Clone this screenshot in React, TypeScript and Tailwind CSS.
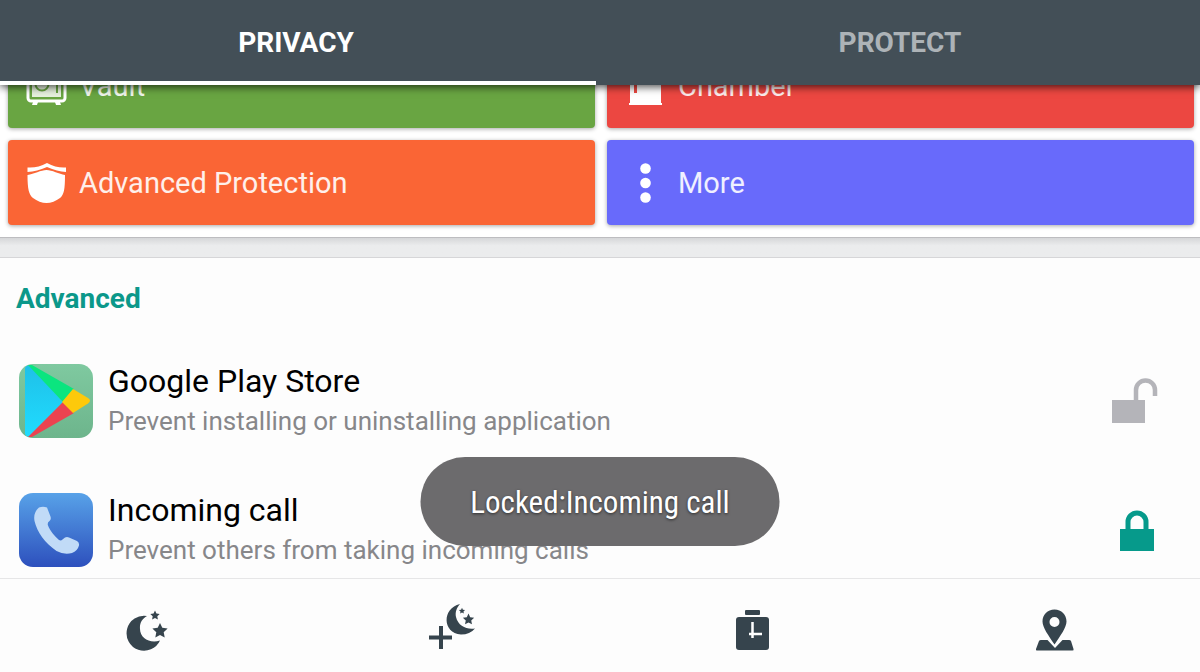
import type { ReactNode } from 'react'

function VaultIcon() {
  return (
    <svg viewBox="0 0 42 42" className="size-[42px]" fill="none" aria-hidden="true">
      <rect x="2" y="2" width="37" height="34" rx="3" stroke="#fff" strokeWidth="3" />
      <rect x="6" y="6" width="29" height="26" fill="#e6f1de" />
      <circle cx="16" cy="19" r="6.5" stroke="#69a542" strokeWidth="2" />
      <path d="M26 18h5v10" stroke="#69a542" strokeWidth="2" />
      <path d="M7 37h5l-1 3H6zM29 37h5l1 3h-5z" fill="#fff" />
    </svg>
  )
}

function DoorIcon() {
  return (
    <svg viewBox="0 0 42 42" className="size-[42px]" fill="#fff" aria-hidden="true">
      <path d="M5 2h31v36h1v2H4v-2h1z" />
      <path d="M9 18h3v10H9z" fill="#ec4741" />
    </svg>
  )
}

function ShieldIcon() {
  return (
    <svg viewBox="0 0 42 42" className="size-[42px]" fill="#fff" aria-hidden="true">
      <path d="M1.500 5.500c7 .5 13-1 19.500-4.500 6.500 3.500 12.500 5 19 4.500v4.500C34 9.500 28 8 21 5 14 8 8 9.500 1.500 10z" />
      <path d="M1.500 13C8 12 15 8 20.500 8S33 12 39 13c0 14-1 20-5 23-4 3-9 5-13.500 5S11 39 7 36c-4-3-5.500-9-5.500-23z" />
    </svg>
  )
}

function DotsIcon() {
  return (
    <svg viewBox="0 0 42 42" className="size-[42px]" fill="#fff" aria-hidden="true">
      <circle cx="20.500" cy="6.500" r="5.300" />
      <circle cx="20.500" cy="21" r="5.300" />
      <circle cx="20.500" cy="35.500" r="5.300" />
    </svg>
  )
}

function PlayStoreIcon() {
  return (
    <svg viewBox="0 0 74 74" className="size-[74px] shrink-0 rounded-[14px]" aria-hidden="true">
      <defs>
        <linearGradient id="play-bg" x1="0" y1="0" x2="0" y2="1">
          <stop offset="0" stopColor="#7fc9a0" />
          <stop offset="1" stopColor="#6db58c" />
        </linearGradient>
        <linearGradient id="play-blue" x1="0" y1="0" x2="0" y2="1">
          <stop offset="0" stopColor="#1fc0e8" />
          <stop offset="1" stopColor="#20dcff" />
        </linearGradient>
      </defs>
      <rect width="74" height="74" fill="url(#play-bg)" />
      <path d="M6 4Q7 1 12 1l32 37L12 73Q7 73 6 70z" fill="url(#play-blue)" />
      <path d="M9 1h4l42 24-11 13z" fill="#0be57f" />
      <path d="M9 73h4l42-24-11-11z" fill="#eb4350" />
      <path d="M54 25l15 9q4 2.500 0 5.500L54 49 43 38z" fill="#fdc90b" />
    </svg>
  )
}

function PhoneIcon() {
  return (
    <svg viewBox="0 0 74 74" className="size-[74px] shrink-0 rounded-[14px]" aria-hidden="true">
      <defs>
        <linearGradient id="phone-bg" x1="0" y1="0" x2="0" y2="1">
          <stop offset="0" stopColor="#58a2e8" />
          <stop offset="1" stopColor="#2d50bd" />
        </linearGradient>
      </defs>
      <rect width="74" height="74" fill="url(#phone-bg)" />
      <path
        d="M20 14.500q4-1.500 8 0l3.500 9q1 3-1 4.500-2.500 1.500-1.500 4.500C31 38 36 43.500 40 47q2 1 3.500-.5l2.500-2q2-1 4 0l8 3.500q2.500 1.500 2 4.500-1.500 5.500-7 7.500-8 2-15.500-2C26 50 18 39 15.500 28q-1.500-8.500 4.500-13.500z"
        fill="#c1dbf7"
      />
    </svg>
  )
}

function UnlockedIcon() {
  return (
    <svg viewBox="0 0 48 46" className="h-[46px] w-12" fill="none" aria-hidden="true">
      <path d="M1 22h33v23H1z" fill="#b4b4b9" />
      <path d="M25 23V12a9.500 9.500 0 0 1 19 0v6" stroke="#b4b4b9" strokeWidth="4.500" />
    </svg>
  )
}

function LockedIcon() {
  return (
    <svg viewBox="0 0 48 46" className="h-[46px] w-12" fill="none" aria-hidden="true">
      <path d="M9 22h34v22H9z" fill="#069a8b" />
      <path d="M17 23v-8a9 9 0 0 1 18 0v8" stroke="#069a8b" strokeWidth="5" />
    </svg>
  )
}

const STAR = 'M0-8 2.300-3.200 7.600-2.500 3.700 1.200 4.700 6.500 0 3.900-4.700 6.500-3.700 1.200-7.600-2.500-2.300-3.200z'

function MoonIcon() {
  return (
    <svg viewBox="0 0 48 48" className="size-12" fill="#36444d" aria-hidden="true">
      <path d="M24 9A17.500 17.500 0 1 0 37 33.500C27 37 17 31 17 22c-.5-6 2-10 7-13z" />
      <path d={STAR} transform="translate(37 24)" />
      <path d={STAR} transform="translate(32 8.500) scale(.62)" />
    </svg>
  )
}

function AddMoonIcon() {
  return (
    <svg viewBox="-3 7 48 48" className="size-12 overflow-visible" fill="#36444d" aria-hidden="true">
      <path d="M31 4C13 8 13 33 32 34.500q9 0 14-6C38 30 29 26 27 17c-1-5 .5-9 4-13z" />
      <path d={STAR} transform="translate(39.500 19.500) scale(.74)" />
      <path d={STAR} transform="translate(33 11) scale(.4)" />
      <path d="M10 26h4v9.500h9v4h-9V49h-4v-9.500H0v-4h10z" />
    </svg>
  )
}

function TimerIcon() {
  return (
    <svg viewBox="0 0 48 48" className="size-12" fill="#36444d" aria-hidden="true">
      <rect x="17" y="3" width="15" height="5" rx="1" />
      <rect x="8" y="10" width="33" height="33" rx="3" />
      <path d="M24.500 15v16M21 27h13" stroke="#fff" strokeWidth="2.500" fill="none" />
    </svg>
  )
}

function PinIcon() {
  return (
    <svg viewBox="0 0 48 48" className="size-12" fill="#36444d" aria-hidden="true">
      <path d="M10 33h6.500l7.500 8 7.500-8H38q1.500 0 2 1l2.500 8q.5 1.500-1 1.500H6q-1.500 0-1-1.500l3-8q.5-1 2-1z" />
      <path
        fillRule="evenodd"
        d="M23.500 2.500c7 0 12 5 12 12 0 6-6 14-12 23-6-9-12-17-12-23 0-7 5-12 12-12zm0 7.500a5 5 0 1 0 0 10 5 5 0 0 0 0-10z"
      />
    </svg>
  )
}

type Tile = { label: string; color: string; icon: ReactNode }

const tiles: Tile[] = [
  { label: 'Vault', color: 'bg-[#69a542]', icon: <VaultIcon /> },
  { label: 'Chamber', color: 'bg-[#ec4741]', icon: <DoorIcon /> },
  { label: 'Advanced Protection', color: 'bg-[#fa6535]', icon: <ShieldIcon /> },
  { label: 'More', color: 'bg-[#686afb]', icon: <DotsIcon /> },
]

const apps = [
  {
    name: 'Google Play Store',
    hint: 'Prevent installing or uninstalling application',
    icon: <PlayStoreIcon />,
    locked: false,
  },
  {
    name: 'Incoming call',
    hint: 'Prevent others from taking incoming calls',
    icon: <PhoneIcon />,
    locked: true,
  },
]

const navItems = [
  { label: 'Night profile', icon: <MoonIcon /> },
  { label: 'Add profile', icon: <AddMoonIcon /> },
  { label: 'Time lock', icon: <TimerIcon /> },
  { label: 'Location lock', icon: <PinIcon /> },
]

export default function App() {
  return (
    <div className="relative flex h-screen flex-col overflow-hidden bg-[#fdfdfd] font-['Roboto',sans-serif]">
      {/* Tabs */}
      <header className="relative z-10 grid h-[85px] shrink-0 grid-cols-2 bg-[#434f57] text-[28px] leading-8 font-bold shadow-[0_2px_8px_rgba(0,0,0,0.7)]">
        <button className="mr-1 border-b-4 border-white pt-1 pr-1 text-white">PRIVACY</button>
        <button className="border-b-4 border-transparent pt-1 text-[#adb3b7]">PROTECT</button>
      </header>

      {/* Reversed column keeps the list scrolled to its end */}
      <main className="flex min-h-0 flex-1 flex-col-reverse overflow-y-auto [scrollbar-width:none]">
        <div className="shrink-0">
          <section className="grid grid-cols-2 gap-3 border-b border-[#bdbdc0] bg-white pt-3 pr-1.5 pb-3 pl-2">
            {tiles.map((t) => (
              <button
                key={t.label}
                className={`flex h-[85px] items-center gap-[11px] rounded-[4px] pl-[18px] text-[29px] leading-8 text-white/90 shadow-[0_1px_4px_rgba(0,0,0,0.35)] ${t.color}`}
              >
                {t.icon}
                {t.label}
              </button>
            ))}
          </section>

          <div className="h-5 border-b border-[#d6d6d8] bg-linear-to-b from-[#d6d7d9] to-[#ebeced] to-40%" />

          <section className="px-4 pt-[25px] pb-[11px]">
            <h2 className="text-[28px] leading-8 font-bold text-[#0b988a]">Advanced</h2>
            <ul className="mt-[49px] flex flex-col gap-[55px]">
              {apps.map((a) => (
                <li key={a.name} className="flex h-[74px] items-center gap-[15px] pr-[25px] pl-[3px]">
                  {a.icon}
                  <div className="min-w-0 flex-1">
                    <h3 className="text-[32px] leading-10 text-black">{a.name}</h3>
                    <p className="text-[26px] leading-10 text-[#87878a]">{a.hint}</p>
                  </div>
                  <button aria-label={`${a.locked ? 'Unlock' : 'Lock'} ${a.name}`}>
                    {a.locked ? <LockedIcon /> : <UnlockedIcon />}
                  </button>
                </li>
              ))}
            </ul>
          </section>
        </div>
      </main>

      {/* Bottom navigation */}
      <nav className="-mr-1.5 -ml-1 grid h-[94px] shrink-0 grid-cols-4 border-t border-[#e6e6e7] bg-[#fdfdfd] pt-[10px]">
        {navItems.map((n) => (
          <button key={n.label} aria-label={n.label} className="flex items-center justify-center">
            {n.icon}
          </button>
        ))}
      </nav>

      {/* Toast */}
      <div
        role="status"
        className="absolute bottom-[126px] left-1/2 z-20 flex h-[89px] w-[359px] -translate-x-1/2 items-center justify-center rounded-full bg-[#6c6b6d] pt-0.5 font-['Roboto_Condensed','Roboto',sans-serif] text-[31px] leading-8 whitespace-nowrap text-white [text-shadow:0_1px_3px_rgba(0,0,0,0.6)]"
      >
        Locked:Incoming call
      </div>
    </div>
  )
}
